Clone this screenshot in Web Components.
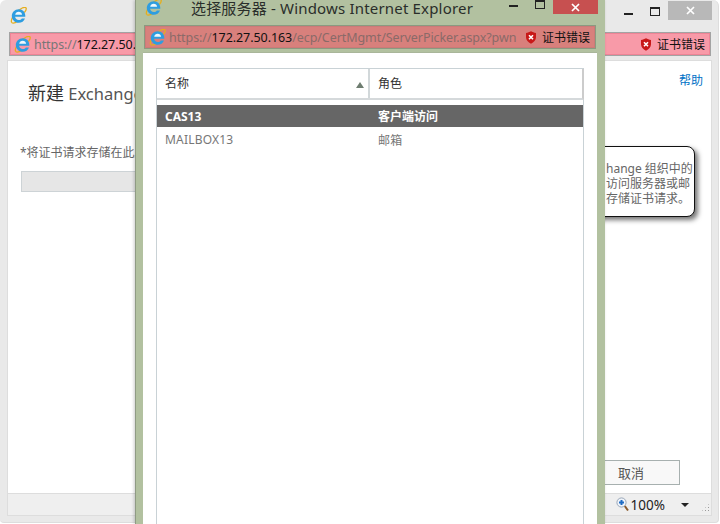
<!DOCTYPE html>
<html lang="zh"><head><meta charset="utf-8"><title>选择服务器</title>
<style>
html,body{margin:0;height:100%;background:#fff;overflow:hidden;font-family:"Noto Sans","Noto Sans CJK SC",sans-serif}
body{position:relative;width:720px;height:524px}
</style></head><body>
<back-window></back-window>
<picker-window></picker-window>
<script>
const FONT=`"Noto Sans","Noto Sans CJK SC",sans-serif`;
function def(name,html){customElements.define(name,class extends HTMLElement{constructor(){super();this.attachShadow({mode:'open'}).innerHTML=html;}});}

def('ie-icon',`<style>:host{display:inline-block;width:17px;height:17px;flex:none}svg{display:block}</style>
<svg width="17" height="17" viewBox="0 0 17 17" fill="none">
<path d="M1.800 15.600C.4 14 2.400 9.200 6.500 5.200S14.600-.6 15.900.8c1 1.100-.2 3.100-1.600 4.800" stroke="#e6ae1c" stroke-width="1.300"/>
<path d="M1.800 15.600c1.100 1.100 3.800.2 6.200-1.300" stroke="#e6ae1c" stroke-width="1.300"/>
<path d="M8.700 2.200C4.900 2.200 1.800 5.200 1.800 9s3.100 6.800 6.900 6.800c3 0 5.300-1.700 6.300-4.400h-3.200c-.6 1-1.700 1.600-3 1.600-2 0-3.500-1.300-3.700-3.200h10.200c.4-4.500-2.500-7.600-6.600-7.600z" fill="#2e9de0"/>
<path d="M5.200 7.700c.2-1.700 1.700-2.900 3.500-2.900s3.200 1.200 3.400 2.900z" fill="#eef8fd"/>
</svg>`);

def('shield-icon',`<style>:host{display:inline-block;width:12px;height:13px;flex:none}svg{display:block}</style>
<svg width="12" height="13" viewBox="0 0 12 13"><path d="M6 .3C4.600 1.200 2.800 1.800 1 1.900v4.400c0 3 2.200 5 5 6.400 2.800-1.400 5-3.400 5-6.400V1.900C9.200 1.800 7.400 1.200 6 .3z" fill="#c81818"/>
<path d="M4 4.300l4 4M8 4.300l-4 4" stroke="#fff" stroke-width="1.600"/></svg>`);

def('win-controls',`<style>
:host{display:flex;align-items:flex-start;height:20px;--c:#222;--close:#b8b8b8}
.min{width:9px;height:2px;background:var(--c);margin-top:var(--min-top,13px);margin-left:var(--min-left,0)}
.max{width:8px;height:6px;border:1px solid var(--c);border-top-width:2px;margin-left:var(--max-left,17px);margin-top:var(--max-top,7px)}
.close{width:var(--close-w,44px);height:var(--close-h,19px);background:var(--close);margin-left:var(--close-left,8px);margin-top:var(--close-top,1px);display:flex;align-items:center;justify-content:center}
</style><div class="min"></div><div class="max"></div><div class="close"><svg width="9" height="9" viewBox="0 0 9 9"><path d="M1 1l7 7M8 1L1 8" stroke="#fff" stroke-width="1.700"/></svg></div>`);

def('address-bar',`<style>
:host{display:flex;align-items:center;box-sizing:border-box;height:24px;border:1px solid var(--edge,#a3a3a3);box-shadow:inset 0 0 0 1px var(--inner,#ee8496);background:var(--fill,#f89aa8);padding:0 5px 0 4px;font:12.5px ${FONT};color:var(--dim,#777);overflow:hidden}
.url{flex:1;min-width:0;white-space:nowrap;overflow:hidden;margin-left:3px;letter-spacing:-.07px}
.err{display:flex;align-items:center;gap:5px;font-size:12px;flex:none;color:#111;margin-left:5px}
</style><ie-icon></ie-icon><span class="url"><slot name="url"></slot></span><span class="err"><shield-icon></shield-icon>证书错误</span>`);

def('sort-grid',`<style>
:host{display:flex;flex-direction:column;flex:1;box-sizing:border-box;border:solid #c9d2d6;border-width:1px 1px 0 1px;font:12px ${FONT};color:#333;background:#fff;min-height:0}
.head{display:grid;grid-template-columns:213px 1fr;height:29px;border-bottom:2px solid #d5d9db;border-right:2px solid #ccc;margin-right:-1px}
.head>div{display:flex;align-items:center;padding-left:8px;padding-bottom:1px;box-sizing:border-box}
.head>div:first-child{border-right:2px solid #d2d8da;justify-content:space-between;padding-right:4px}
.body{margin-top:5px}
</style><div class="head"><div><span>名称</span><svg width="8" height="6" viewBox="0 0 8 6" style="margin-top:3px"><path d="M4 0l4 6H0z" fill="#6e7d70"/></svg></div><div>角色</div></div><div class="body"><slot></slot></div>`);

def('grid-row',`<style>
:host{display:grid;grid-template-columns:213px 1fr;height:25px;align-items:center;font:12px ${FONT};color:#777;letter-spacing:.2px}
:host([selected]){background:#666;color:#fff;font-weight:700;height:22px;letter-spacing:0}
span{padding-left:8px;white-space:nowrap}
</style><span><slot name="a"></slot></span><span><slot name="b"></slot></span>`);

def('hint-box',`<style>
:host{position:absolute;left:532px;top:85px;width:155px;height:71px;box-sizing:border-box;background:#fff;border:1px solid #111;border-radius:0 8px 8px 0;box-shadow:3px 3px 5px rgba(0,0,0,.55);padding:14px 0 0 65px;font:12px/15px ${FONT};color:#666;white-space:nowrap}
</style><slot></slot>`);

def('status-strip',`<style>
:host{display:flex;align-items:center;justify-content:flex-end;height:22px;box-sizing:border-box;background:#efefef;border-top:1px solid #ddd;font:13.5px ${FONT};color:#222;padding-right:1px}
.arrow{width:0;height:0;border:solid transparent;border-width:4px 4px 0;border-top-color:#222;margin-left:16px}
.grip{width:9px;height:9px;margin:6px 0 0 12px;background:radial-gradient(circle,#999 0 1px,transparent 1px) 0 0/3px 3px;clip-path:polygon(100% 0,100% 100%,0 100%)}
span{margin-left:2px}
</style><svg width="13" height="15" viewBox="0 0 13 15"><circle cx="5.500" cy="5.500" r="4.600" fill="#eef3fa" stroke="#9aa7b8"/><path d="M3 5.500h5M5.500 3v5" stroke="#1f6cc4" stroke-width="2"/><path d="M8.800 9l3.200 4.500" stroke="#8b5a2b" stroke-width="2"/></svg><span>100%</span><i class="arrow"></i><i class="grip"></i>`);

def('back-window',`<style>
:host{position:absolute;left:0;top:0;width:719px;height:523px;box-sizing:border-box;background:#e9e9e9;border-radius:6px 6px 4px 4px;border-bottom:1px solid #ddd;border-right:1px solid #ddd;display:flex;flex-direction:column;padding:0 6px 6px 7px;font:12px ${FONT};color:#666}
.bar{height:32px;display:flex;justify-content:space-between;align-items:flex-start}
.bar ie-icon{margin:7px 0 0 3px}
address-bar{margin:0 0 0 2px;width:702px}
.panel{flex:1;margin-top:4px;border:1px solid #ddd;display:flex;flex-direction:column;background:#fff;min-height:0}
.main{flex:1;display:flex;flex-direction:column;position:relative;min-height:0}
.top{display:flex;justify-content:space-between;align-items:flex-start}
h1{margin:18px 0 0 20px;font:400 16.5px ${FONT};color:#555;white-space:nowrap}
h1 b{font-weight:400;color:#333;font-size:18px}
a{margin:10px 8px 0 0;color:#0072c6;text-decoration:none}
label{margin:39px 0 0 12px;white-space:nowrap;line-height:17px;display:block}
.field{margin:10px 0 0 13px;width:400px;height:21px;box-sizing:border-box;background:#e6e6e6;border:1px solid #cdd3d6}
.actions{margin-top:auto;padding:0 31px 8px 0;display:flex;justify-content:flex-end}
button{width:120px;height:25px;background:#f8f8f8;border:1px solid #a7b0af;font:13px ${FONT};color:#555;text-align:right;padding:0 35px 0 0}
</style>
<div class="bar"><ie-icon></ie-icon><win-controls></win-controls></div>
<address-bar><span slot="url">https://<span style="color:#111">172.27.50.163</span>/ecp/CertMgmt/</span></address-bar>
<div class="panel"><div class="main">
<div class="top"><h1><b>新建</b> Exchange 证书</h1><a href="#">帮助</a></div>
<label>*将证书请求存储在此服务器上:</label><div class="field"></div>
<div class="actions"><button>取消</button></div>
<hint-box>hange 组织中的<br>访问服务器或邮<br>存储证书请求。</hint-box>
</div><status-strip></status-strip></div>`);

def('picker-window',`<style>
:host{position:absolute;left:135px;top:0;width:470px;height:524px;box-sizing:border-box;background:#b2c1a0;border-left:1px solid #8f9b84;box-shadow:-1px 0 3px rgba(0,0,0,.2);display:flex;flex-direction:column;padding:0 8px 0 7px;font:12px ${FONT}}
.bar{height:25px;display:flex;align-items:flex-start;color:#2a2e2a;font-size:15px;white-space:nowrap}
.bar ie-icon{margin:-1px 0 0 2px}
.bar span{margin:0 0 0 29px;line-height:16px;flex:1;letter-spacing:.18px}
win-controls{--min-top:5px;--max-top:0;--close:#c75050;--close-w:45px;--close-h:14px;--close-top:0;margin-right:-1px}
address-bar{--fill:#d8807c;--inner:#cc7a78;--edge:#8b9a80;--dim:#8a6a68;margin:0 0 3px 1px;width:452px}
.sheet{flex:1;background:#fff;padding:15px 13px 0 13px;display:flex;flex-direction:column;min-height:0;border-top:1px solid #a9b69a}
span[slot]{white-space:nowrap}
</style>
<div class="bar"><ie-icon></ie-icon><span>选择服务器 - Windows Internet Explorer</span><win-controls></win-controls></div>
<address-bar><span slot="url">https://<span style="color:#111">172.27.50.163</span>/ecp/CertMgmt/ServerPicker.aspx?pwn</span></address-bar>
<div class="sheet"><sort-grid>
<grid-row selected><span slot="a">CAS13</span><span slot="b">客户端访问</span></grid-row>
<grid-row><span slot="a">MAILBOX13</span><span slot="b">邮箱</span></grid-row>
</sort-grid></div>`);
</script></body></html>
